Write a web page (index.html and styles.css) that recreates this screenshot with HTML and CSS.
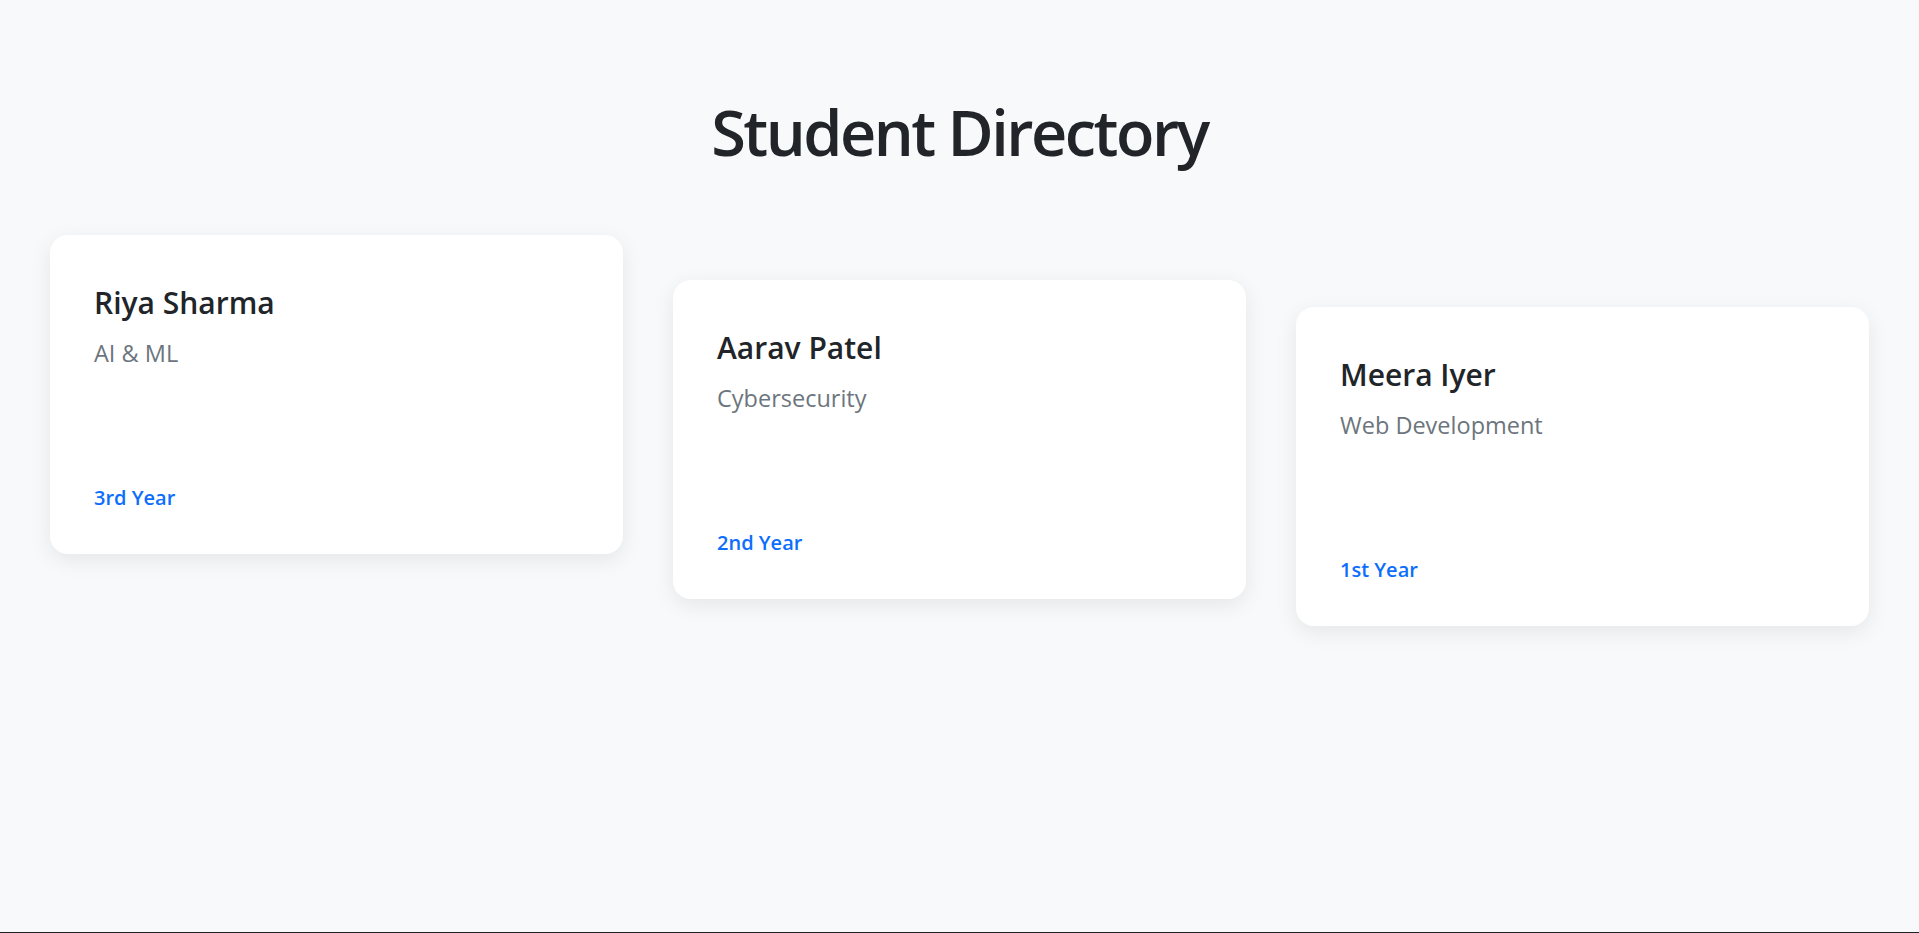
FILE: index.html
```html
<!DOCTYPE html>
<html lang="en">
<head>
<meta charset="utf-8">
<title>Student Directory</title>
<link rel="stylesheet" href="styles.css">
</head>
<body>
<main class="page">
  <h1 class="page-title">Student Directory</h1>
  <section class="card-grid">
    <article class="card card-first">
      <h2 class="card-name">Riya Sharma</h2>
      <p class="card-subject">AI &amp; ML</p>
      <p class="card-year">3rd Year</p>
    </article>
    <article class="card card-second">
      <h2 class="card-name">Aarav Patel</h2>
      <p class="card-subject">Cybersecurity</p>
      <p class="card-year">2nd Year</p>
    </article>
    <article class="card card-third">
      <h2 class="card-name">Meera Iyer</h2>
      <p class="card-subject">Web Development</p>
      <p class="card-year">1st Year</p>
    </article>
  </section>
</main>
</body>
</html>
```
FILE: styles.css
```css
* {
  box-sizing: border-box;
}

html,
body {
  margin: 0;
  min-height: 100%;
  background: #f8f9fa;
}

body {
  font-family: "Open Sans", "Noto Sans", sans-serif;
  color: #212529;
  min-height: 100vh;
}

body::after {
  content: "";
  position: fixed;
  left: 0;
  right: 0;
  bottom: 0;
  height: 1px;
  background: #1f2124;
}

.page {
  padding: 94px 50px 0;
}

.page-title {
  margin: 0 0 65px;
  text-align: center;
  font-size: 63px;
  font-weight: 600;
  line-height: 1.2;
  letter-spacing: -2.5px;
}

.card-grid {
  display: grid;
  grid-template-columns: repeat(3, 1fr);
  gap: 50px;
  align-items: start;
}

.card {
  display: flex;
  flex-direction: column;
  min-height: 319px;
  padding: 50px 44px 41px;
  background: #ffffff;
  border-radius: 18px;
  box-shadow: 0 6px 22px rgba(0, 0, 0, 0.08);
}

.card-second {
  margin-top: 45px;
}

.card-third {
  margin-top: 72px;
}

.card-name {
  margin: 0 0 15px;
  font-size: 30px;
  font-weight: 600;
  line-height: 1.2;
}

.card-subject {
  margin: 0;
  font-size: 23.5px;
  line-height: 1.5;
  color: #6c757d;
}

.card-year {
  margin: auto 0 0;
  font-size: 20px;
  font-weight: 600;
  line-height: 1.5;
  color: #0d6efd;
}
```
